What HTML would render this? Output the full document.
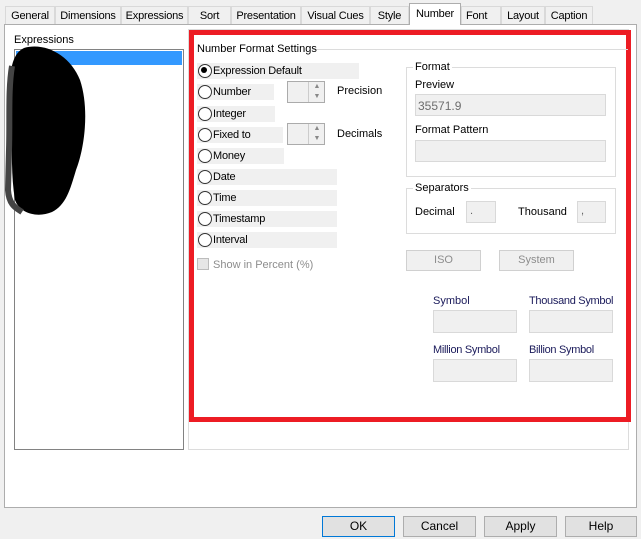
<!DOCTYPE html>
<html><head><style>
*{box-sizing:border-box;margin:0;padding:0}
body{width:641px;height:539px;background:#f0f0f0;font-family:"Liberation Sans",sans-serif;font-size:11px;color:#000;position:relative;overflow:hidden}
.a{position:absolute}
.tab{position:absolute;top:6px;height:18px;border:1px solid #d9d9d9;border-bottom:none;background:#f0f0f0;text-align:center;line-height:18px;font-size:11px;letter-spacing:-0.2px}
.box{position:absolute;background:#f0f0f0;border:1px solid #d9d9d9}
.rl{position:absolute;left:197px;height:16px;background:#f0f0f0;line-height:17px;padding-left:16px;letter-spacing:-0.2px}
.rl:before{content:"";position:absolute;left:1px;top:1px;width:12px;height:12px;border:1px solid #333;border-radius:50%;background:#fff}
.sel:after{content:"";position:absolute;left:4px;top:4px;width:6px;height:6px;border-radius:50%;background:#000}
.btn{position:absolute;height:21px;border:1px solid #adadad;background:#e1e1e1;text-align:center;line-height:19px;font-size:12px}
.grp{position:absolute;border:1px solid #dcdcdc}
.lg{position:absolute;background:#fff;padding:0 2px;top:-7px;left:6px;line-height:12px}
.navy{color:#1a1a5a}
</style></head><body>
<div class="a" style="left:4px;top:24px;width:633px;height:484px;background:#fff;border:1px solid #adadad"></div>
<div class="tab" style="left:5px;width:50px">General</div>
<div class="tab" style="left:55px;width:66px">Dimensions</div>
<div class="tab" style="left:121px;width:67px">Expressions</div>
<div class="tab" style="left:188px;width:43px">Sort</div>
<div class="tab" style="left:231px;width:70px">Presentation</div>
<div class="tab" style="left:301px;width:69px">Visual Cues</div>
<div class="tab" style="left:370px;width:39px">Style</div>
<div class="tab" style="left:409px;top:3px;height:22px;width:52px;background:#fff;border-color:#adadad;line-height:21px">Number</div>
<div class="tab" style="left:461px;width:40px;text-align:left;padding-left:4px">Font</div>
<div class="tab" style="left:501px;width:44px">Layout</div>
<div class="tab" style="left:545px;width:48px">Caption</div>

<div class="a" style="left:14px;top:34px">Expressions</div>
<div class="a" style="left:14px;top:49px;width:170px;height:401px;border:1px solid #828282;background:#fff"></div>
<div class="a" style="left:16px;top:51px;width:166px;height:14px;background:#3399ff"></div>
<svg class="a" style="left:0;top:0" width="200" height="230"><path d="M24 48 C45 42 70 55 80 80 C90 110 84 150 76 170 C70 190 66 205 52 212 C38 218 20 214 15 200 C10 170 13 140 11 110 C9 80 9 55 24 48Z" fill="#000"/><path d="M12 66 C8 90 10 120 9 150 L8 190 C9 205 16 208 22 212" stroke="#444" stroke-width="6" fill="none"/></svg>

<div class="a" style="left:188px;top:29px;width:441px;height:421px;border:1px solid #dcdcdc;background:#fff"></div>
<div class="a" style="left:189px;top:30px;width:442px;height:392px;border:5px solid #ed1c24"></div>

<div class="a" style="left:312px;top:49px;width:316px;height:1px;background:#dcdcdc"></div>
<div class="a" style="left:197px;top:43px">Number Format Settings</div>
<div class="rl sel" style="top:63px;width:162px">Expression Default</div>
<div class="rl" style="top:84px;width:77px">Number</div>
<div class="rl" style="top:106px;width:78px">Integer</div>
<div class="rl" style="top:127px;width:86px">Fixed to</div>
<div class="rl" style="top:148px;width:87px">Money</div>
<div class="rl" style="top:169px;width:140px">Date</div>
<div class="rl" style="top:190px;width:140px">Time</div>
<div class="rl" style="top:211px;width:140px">Timestamp</div>
<div class="rl" style="top:232px;width:140px">Interval</div>
<div class="a" style="left:197px;top:258px;width:12px;height:12px;border:1px solid #bcbcbc;background:#e6e6e6"></div>
<div class="a" style="left:213px;top:259px;color:#8d8d8d">Show in Percent (%)</div>

<div class="box" style="left:287px;top:81px;width:38px;height:22px;border-color:#ababab"><div class="a" style="left:20px;top:0;width:17px;height:20px;border-left:1px solid #ccc;font-size:7px;color:#888;text-align:center;line-height:10px">▲<br>▼</div></div>
<div class="box" style="left:287px;top:123px;width:38px;height:22px;border-color:#ababab"><div class="a" style="left:20px;top:0;width:17px;height:20px;border-left:1px solid #ccc;font-size:7px;color:#888;text-align:center;line-height:10px">▲<br>▼</div></div>
<div class="a" style="left:337px;top:85px">Precision</div>
<div class="a" style="left:337px;top:128px">Decimals</div>

<div class="grp" style="left:406px;top:67px;width:210px;height:110px"><div class="lg">Format</div></div>
<div class="a" style="left:415px;top:79px">Preview</div>
<div class="box" style="left:415px;top:94px;width:191px;height:22px;color:#6d6d6d;padding:4px 2px;font-size:12px">35571.9</div>
<div class="a" style="left:415px;top:124px">Format Pattern</div>
<div class="box" style="left:415px;top:140px;width:191px;height:22px"></div>

<div class="grp" style="left:406px;top:188px;width:210px;height:46px"><div class="lg">Separators</div></div>
<div class="a" style="left:415px;top:206px">Decimal</div>
<div class="box" style="left:466px;top:201px;width:30px;height:22px;color:#666;padding:3px">.</div>
<div class="a" style="left:518px;top:206px">Thousand</div>
<div class="box" style="left:577px;top:201px;width:29px;height:22px;color:#666;padding:3px">,</div>

<div class="btn" style="left:406px;top:250px;width:75px;color:#8d8d8d;background:#f0f0f0;border-color:#d0d0d0;font-size:11px">ISO</div>
<div class="btn" style="left:499px;top:250px;width:75px;color:#8d8d8d;background:#f0f0f0;border-color:#d0d0d0;font-size:11px">System</div>

<div class="a navy" style="left:433px;top:295px">Symbol</div>
<div class="a navy" style="left:529px;top:295px;letter-spacing:-0.3px">Thousand Symbol</div>
<div class="box" style="left:433px;top:310px;width:84px;height:23px"></div>
<div class="box" style="left:529px;top:310px;width:84px;height:23px"></div>
<div class="a navy" style="left:433px;top:344px;letter-spacing:-0.3px">Million Symbol</div>
<div class="a navy" style="left:529px;top:344px;letter-spacing:-0.3px">Billion Symbol</div>
<div class="box" style="left:433px;top:359px;width:84px;height:23px"></div>
<div class="box" style="left:529px;top:359px;width:84px;height:23px"></div>

<div class="btn" style="left:322px;top:516px;width:73px;border-color:#0078d7">OK</div>
<div class="btn" style="left:403px;top:516px;width:73px">Cancel</div>
<div class="btn" style="left:484px;top:516px;width:73px">Apply</div>
<div class="btn" style="left:565px;top:516px;width:72px">Help</div>
</body></html>
